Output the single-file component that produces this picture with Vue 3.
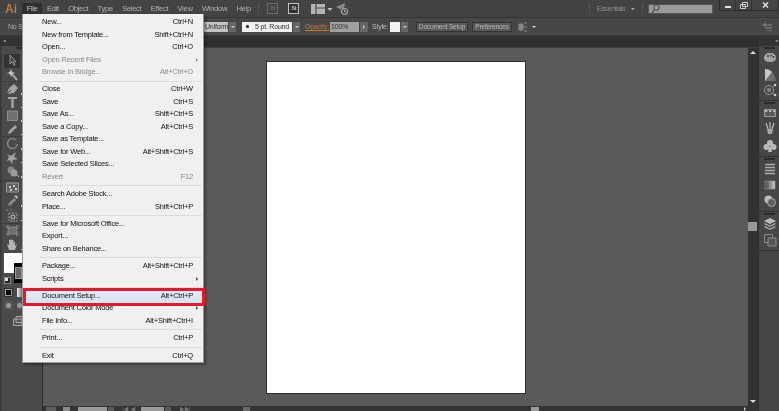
<template>
  <div class="app">
    <header class="menubar">
      <span class="logo">Ai</span>
      <nav class="mainmenu">
        <span v-for="m in menus" :key="m" class="mitem" :class="{ open: m === 'File' }">{{ m }}</span>
      </nav>
      <i class="vsep first"></i>
      <span class="badge dim">Br</span>
      <span class="badge">St</span>
      <svg class="wsicon" width="24" height="12" viewBox="0 0 24 12">
        <path d="M1 1h14v10H1z" fill="#b4b4b4" />
        <path d="M6 1v10M6 5h9" stroke="#4a4a4a" stroke-width="1.2" />
        <path d="M17.500 5h5l-2.500 3z" fill="#c4c4c4" />
      </svg>
      <svg class="rocket" width="14" height="14" viewBox="0 0 14 14">
        <path d="M1 5l9-4-1 5-4 1z" fill="#8c8c8c" />
        <path d="M5 9l3-5 1 3z" fill="#777" />
        <circle cx="9.500" cy="9.500" r="3" fill="none" stroke="#aaa" stroke-width="1.200" />
        <path d="M9.500 7.800v2h1.500" fill="none" stroke="#aaa" />
      </svg>
      <span class="spacer"></span>
      <i class="vsep"></i>
      <span class="essentials">Essentials</span>
      <span class="tiny-caret"></span>
      <i class="vsep second"></i>
      <div class="search">
        <svg width="9" height="10" viewBox="0 0 9 10"><circle cx="5.500" cy="3.500" r="2.700" fill="none" stroke="#444" /><path d="M3.500 5.500L1 9" stroke="#444" stroke-width="1.200" /></svg>
      </div>
      <div class="winbtns">
        <span class="wb min"><i></i></span>
        <span class="wb"><svg width="8" height="7" viewBox="0 0 8 7"><path d="M2.500.5h5v4h-5zM.5 2.500h5v4h-5z" fill="#444" stroke="#d0d0d0" /></svg></span>
        <span class="wb close"><svg width="7" height="6" viewBox="0 0 7 6"><path d="M1 .5l5 5M6 .5l-5 5" stroke="#e2e2e2" stroke-width="1.500" /></svg></span>
      </div>
    </header>

    <section class="controlbar">
      <span class="nosel">No Selection</span>
      <span class="spacer"></span>
      <span class="field uniform">Uniform</span>
      <span class="capbtn"><b></b></span>
      <span class="field stroke"><em></em>5 pt. Round</span>
      <span class="capbtn"><b></b></span>
      <a class="opacity">Opacity:</a>
      <span class="field pct">100%</span>
      <span class="capbtn side"></span>
      <span class="stylelabel">Style:</span>
      <span class="swatch"></span>
      <span class="capbtn"><b></b></span>
      <button class="cbtn docsetup">Document Setup</button>
      <button class="cbtn prefs">Preferences</button>
      <svg class="arrange" width="10" height="10" viewBox="0 0 10 10"><path d="M1 2h4v6H1zM6 1h3M6 5h3M6 9h3" fill="#888" stroke="#888" /></svg>
      <span class="ctrl-caret"></span>
      <span class="flexfill"></span>
      <svg class="cmenu" width="10" height="8" viewBox="0 0 10 8"><path d="M0 2h10M3 5h7M5 8h5M3 0v4" stroke="#8a8a8a" /></svg>
    </section>

    <div class="workspace">
      <aside class="tools">
        <div class="collapse-bar"><span class="chev">◂◂</span></div>
        <i class="grip"></i>
        <div class="toolicons">
          <span v-for="t in tools" :key="t.id" class="tool" :class="{ sel: t.sel, grouped: t.group, tall: t.tall }">
            <svg width="15" height="13" viewBox="0 0 15 13" v-html="t.svg"></svg>
            <i v-if="t.more" class="more"></i>
          </span>
        </div>
        <div class="colorwell">
          <span class="fill"></span>
          <span class="strokewell"><u></u></span>
          <span class="defaults"><s></s></span>
        </div>
        <div class="modes">
          <span class="mode"><i class="m-black"></i></span>
          <span class="mode grad"></span>
        </div>
        <div class="modes draw">
          <span class="mode round"><i></i></span>
          <span class="mode round"><i></i></span>
        </div>
        <svg class="screenmode" width="12" height="10" viewBox="0 0 12 10"><path d="M3 .5h8.500v6H3zM.5 3h8.500v6.500H.5z" fill="#555" stroke="#aaa" /></svg>
      </aside>

      <div class="stage">
        <div class="tabstrip"></div>
        <div class="canvas-row">
          <main class="canvas">
            <div class="artboard"></div>
          </main>
          <div class="vscroll">
            <span class="tri up"></span>
            <span class="vthumb"></span>
            <span class="tri down"></span>
          </div>
        </div>
        <footer class="status">
          <span class="st-ic"></span>
          <span class="st-ic small"></span>
          <span class="st-field"></span>
          <span class="st-cap"></span>
          <svg class="st-nav" width="14" height="5" viewBox="0 0 14 5"><path d="M1 0v5M6 0L2 2.500 6 5zM13 0L9 2.500 13 5z" fill="#777" stroke="#777" stroke-width=".5" /></svg>
          <span class="st-field second"></span>
          <span class="st-cap"></span>
          <svg class="st-nav next" width="10" height="5" viewBox="0 0 10 5"><path d="M0 0l4 2.500L0 5zM5 0l4 2.500L5 5zM9.500 0v5" fill="#777" stroke="#777" stroke-width=".5" /></svg>
          <span class="st-bits"></span>
          <span class="hthumb"></span>
          <span class="tri right"></span>
        </footer>
      </div>

      <aside class="docks">
        <div class="collapse-bar right"><span class="chev">◂◂</span></div>
        <div v-for="(g, i) in docks" :key="i" class="dock">
          <i class="grip"></i>
          <svg v-for="(d, j) in g" :key="j" width="14" height="14" viewBox="0 0 14 14" :style="{ marginTop: d.gap + 'px' }" v-html="d.svg"></svg>
        </div>
      </aside>
    </div>

    <div class="filemenu">
      <template v-for="(it, i) in items" :key="i">
        <div v-if="it.sep" class="sep"></div>
        <div v-else class="row" :class="{ off: it.off, hot: it.hot }">
          <span>{{ it.label }}</span>
          <span class="sc">{{ it.sc }}</span>
          <i v-if="it.sub" class="subarrow"></i>
        </div>
      </template>
    </div>
  </div>
</template>

<script setup>
const menus = ['File', 'Edit', 'Object', 'Type', 'Select', 'Effect', 'View', 'Window', 'Help']

const items = [
  { label: 'New...', sc: 'Ctrl+N' },
  { label: 'New from Template...', sc: 'Shift+Ctrl+N' },
  { label: 'Open...', sc: 'Ctrl+O' },
  { label: 'Open Recent Files', off: true, sub: true },
  { label: 'Browse in Bridge...', sc: 'Alt+Ctrl+O', off: true },
  { sep: true },
  { label: 'Close', sc: 'Ctrl+W' },
  { label: 'Save', sc: 'Ctrl+S' },
  { label: 'Save As...', sc: 'Shift+Ctrl+S' },
  { label: 'Save a Copy...', sc: 'Alt+Ctrl+S' },
  { label: 'Save as Template...' },
  { label: 'Save for Web...', sc: 'Alt+Shift+Ctrl+S' },
  { label: 'Save Selected Slices...' },
  { label: 'Revert', sc: 'F12', off: true },
  { sep: true },
  { label: 'Search Adobe Stock...' },
  { label: 'Place...', sc: 'Shift+Ctrl+P' },
  { sep: true },
  { label: 'Save for Microsoft Office...' },
  { label: 'Export...' },
  { label: 'Share on Behance...' },
  { sep: true },
  { label: 'Package...', sc: 'Alt+Shift+Ctrl+P' },
  { label: 'Scripts', sub: true },
  { sep: true },
  { label: 'Document Setup...', sc: 'Alt+Ctrl+P', hot: true },
  { label: 'Document Color Mode', sub: true },
  { label: 'File Info...', sc: 'Alt+Shift+Ctrl+I' },
  { sep: true },
  { label: 'Print...', sc: 'Ctrl+P' },
  { sep: true },
  { label: 'Exit', sc: 'Ctrl+Q' }
]

const c = '#a4a4a4'
const tools = [
  { id: 'select', sel: true, svg: `<path d="M5 1v9l2-2 2 3.500 1.200-.8-2-3H11z" fill="#444" stroke="${c}" stroke-width=".8"/>` },
  { id: 'wand', svg: `<path d="M7 6l5 6" stroke="${c}" stroke-width="2"/><path d="M6 1l1 3 3 1-3 1-1 3-1-3-3-1 3-1z" fill="#ccc"/>` },
  { id: 'pen', group: true, more: true, svg: `<path d="M2 12l2-6 5-4 4 4-4 5z" fill="${c}"/><path d="M2 12l4-4" stroke="#444"/>` },
  { id: 'type', more: true, svg: `<path d="M3 1h9v2H8.700v9H6.300V3H3z" fill="${c}"/>` },
  { id: 'rect', more: true, svg: `<path d="M2.500 2h10v9.500h-10z" fill="#707070" stroke="#8c8c8c"/>` },
  { id: 'brush', more: true, svg: `<path d="M3 11l1-3 6-6 2 2-6 6z" fill="${c}"/>` },
  { id: 'rotate', group: true, more: true, svg: `<path d="M11 3a5 5 0 1 0 1.500 4" fill="none" stroke="#858585" stroke-width="1.500"/>` },
  { id: 'warp', more: true, svg: `<path d="M2 3l4 2 5-4-2 5 4 2-5 1-1 4-2-4-3 1 2-4z" fill="${c}"/>` },
  { id: 'builder', tall: true, more: true, svg: `<circle cx="6" cy="5" r="3.500" fill="#858585"/><circle cx="9" cy="8" r="3.500" fill="#9c9c9c"/><path d="M12 10l2 2" stroke="#bbb"/>` },
  { id: 'mesh', group: true, tall: true, svg: `<path d="M1.500 2h12v9h-12z" fill="#606060" stroke="#999"/><path d="M4 5h2v2H4zM8 4h2v2H8zM10 7h2v2h-2zM5 8h2v2H5z" fill="#ccc"/>` },
  { id: 'dropper', more: true, svg: `<path d="M3 12l1-3 5-5 2 2-5 5z" fill="#8c8c8c"/><path d="M9 2l3 3 1-2-2-2z" fill="#bbb"/>` },
  { id: 'symbol', tall: true, more: true, svg: `<path d="M4 4h8v8H4z" fill="none" stroke="#999" stroke-dasharray="2 1"/><circle cx="8" cy="8" r="2" fill="none" stroke="#ccc"/><path d="M1 1h2M5 1h2" stroke="#888"/>` },
  { id: 'artboard', group: true, tall: true, svg: `<path d="M3 3h9v7H3z" fill="#6e6e6e"/><path d="M1 3h13M1 10h13M3 1v11M12 1v11" stroke="#999" stroke-dasharray="2 1"/>` },
  { id: 'hand', more: true, svg: `<path d="M4 12L2 6l2 1V2h1.500v3V1.500H7V5V2h1.500v3.500L10 3v5l2-2-2 6z" fill="#b4b4b4"/>` }
]

const docks = [
  [
    { gap: 2, svg: `<path d="M7 2C3 2 1 4 1 7s3 4 6 4 6-1 6-4-2-5-6-5z" fill="${c}"/><circle cx="5" cy="5" r="1" fill="#444"/><circle cx="8" cy="4.500" r="1" fill="#444"/><circle cx="10.500" cy="6" r="1" fill="#444"/>` },
    { gap: 3, svg: `<path d="M2 1c6 0 10 5 11 12H2z" fill="#6e6e6e"/><path d="M2 1c3 0 5 1 7 3L2 13z" fill="#c4c4c4"/>` },
    { gap: 1, svg: `<circle cx="6" cy="7" r="4.500" fill="none" stroke="#999"/><circle cx="6" cy="7" r="2.200" fill="#808080"/><circle cx="12" cy="2" r="1.300" fill="#ccc"/><circle cx="12" cy="12" r="1.300" fill="#ccc"/><path d="M10 4l1-1M10 10l1 1" stroke="#999"/>` }
  ],
  [
    { gap: 2, svg: `<path d="M1.500 3.500h11v7h-11z" fill="#606060" stroke="#999"/><path d="M2 4h3v2H2zM6 4h3v2H6zM10 4h2v2h-2z" fill="#b0b0b0"/><path d="M5 4v6M9 4v6" stroke="#444"/>` },
    { gap: 1, svg: `<path d="M4 8h6l-1 5H5z" fill="${c}"/><path d="M5 8L3 2M7 8V1M9 8l2-6" stroke="#bbb" stroke-width="1.200"/>` },
    { gap: 4, svg: `<circle cx="7" cy="4" r="3" fill="#b8b8b8"/><circle cx="3.500" cy="8" r="3" fill="#b8b8b8"/><circle cx="10.500" cy="8" r="3" fill="#b8b8b8"/><path d="M6 8h2l1 5H5z" fill="#b8b8b8"/>` }
  ],
  [
    { gap: 2, svg: `<path d="M2 2.500h10M2 5.500h10M2 8.500h10M2 11.500h10" stroke="#aaa" stroke-width="1.300"/>` },
    { gap: 2, svg: `<defs><linearGradient id="g1"><stop offset="0" stop-color="#444"/><stop offset="1" stop-color="#ccc"/></linearGradient></defs><path d="M2 3h10v8H2z" fill="url(#g1)" stroke="#999" stroke-width=".6"/>` },
    { gap: 2, svg: `<circle cx="5.500" cy="5.500" r="4" fill="#bbb"/><circle cx="8.500" cy="8.500" r="4" fill="#606060" stroke="#aaa"/>` }
  ],
  [
    { gap: 2, svg: `<path d="M7 1l6 3-6 3-6-3z" fill="#bbb"/><path d="M7 8.500L2 6 1 7l6 3 6-3-1-1zM7 11.500L2 9l-1 1 6 3 6-3-1-1z" fill="#aaa"/>` },
    { gap: 2, svg: `<path d="M1.500 1.500h8v8h-8z" fill="none" stroke="#8c8c8c"/><path d="M5 5h8v8H5z" fill="#555" stroke="#8c8c8c"/>` }
  ]
]
</script>

<style>
html, body { margin: 0; background: #484848; overflow: hidden; }
</style>

<style scoped>
.app {
  position: relative;
  width: 779px;
  height: 411px;
  display: flex;
  flex-direction: column;
  overflow: hidden;
  font-family: "Liberation Sans", Arial, sans-serif;
  font-size: 7.500px;
  letter-spacing: -.3px;
  background: #484848;
  filter: blur(.3px);
}

/* top menu */
.menubar {
  height: 17px;
  flex: none;
  display: flex;
  align-items: center;
  background: #434343;
  color: #b0b0b0;
  border-bottom: 1px solid #353535;
}
.logo { margin-left: 5px; width: 17px; font: bold 12px "Liberation Sans", sans-serif; letter-spacing: 0; color: #b57a45; }
.mainmenu { display: flex; font-size: 7.600px; }
.mitem { padding: 0 4.650px; height: 12px; line-height: 11px; }
.mitem.open { background: #2f2f2f; color: #c4c4c4; }
.vsep { width: 1px; height: 11px; background: #555; }
.vsep.first { margin-left: 3px; margin-right: 8px; }
.badge { width: 9px; height: 9px; border: 1px solid #c0c0c0; font: bold 5.500px/9px "Liberation Sans", sans-serif; text-align: center; color: #c0c0c0; background: #333; margin-right: 10px; }
.badge.dim { border-color: #6a6a6a; color: #6a6a6a; background: #444; }
.wsicon { margin-left: 1px; }
.rocket { margin-left: 1px; }
.menubar > .spacer { flex: 1; }
.essentials { margin-left: 7px; width: 28px; white-space: nowrap; color: #8f8f8f; font-size: 6.800px; }
.tiny-caret { margin-left: 6px; width: 0; height: 0; border: 2px solid transparent; border-top-color: #aaa; border-bottom: 0; }
.vsep.second { margin-left: 7px; }
.search { margin-left: 5px; width: 65px; height: 10px; background: #9a9a9a; border: 1px solid #555; box-sizing: border-box; display: flex; align-items: center; padding-left: 2px; }
.winbtns { margin-left: 6px; display: flex; align-self: flex-start; height: 10px; background: #444; border: 1px solid #2c2c2c; border-top: 0; border-radius: 0 0 0 2px; }
.wb { width: 15px; display: flex; align-items: center; justify-content: center; border-right: 1px solid #333; }
.wb.close { width: 26px; border: 0; }
.wb.min i { width: 6px; height: 2px; margin-top: 3px; background: #ddd; }

/* control bar */
.controlbar {
  height: 18px;
  flex: none;
  display: flex;
  align-items: center;
  background: #474747;
  color: #b4b4b4;
  border-bottom: 1px solid #3a3a3a;
  box-sizing: border-box;
  font-size: 7px;
  letter-spacing: -.2px;
}
.nosel { margin-left: 8px; width: 60px; white-space: nowrap; color: #aaa; }
.controlbar > .spacer { width: 136px; }
.field { height: 10px; line-height: 10px; white-space: nowrap; box-sizing: border-box; color: #333; }
.uniform { width: 24px; background: #c4c4c4; padding-left: 1px; }
.stroke { width: 50px; margin-left: 6px; background: #f0f0f0; padding-left: 4px; display: flex; align-items: center; }
.stroke em { width: 3px; height: 3px; border-radius: 50%; background: #111; margin-right: 6px; }
.capbtn { margin-left: 1px; width: 7px; height: 10px; background: #666; display: flex; align-items: center; justify-content: center; flex: none; }
.capbtn b { width: 0; height: 0; border: 2px solid transparent; border-top-color: #ccc; border-bottom: 0; }
.capbtn.side { width: 8px; }
.capbtn.side::after { content: ""; border: 2.500px solid transparent; border-left-color: #ccc; border-right: 0; }
.opacity { margin-left: 5px; width: 23px; color: #c47a26; text-decoration: underline; white-space: nowrap; }
.pct { margin-left: 2px; width: 29px; background: #a0a0a0; padding-left: 1px; }
.stylelabel { margin-left: 4px; width: 18px; color: #bbb; }
.swatch { width: 10px; height: 10px; background: #f2f2f2; }
.cbtn {
  margin: 0 0 0 8px;
  padding: 0;
  height: 10px;
  width: 52px;
  font: inherit;
  font-size: 6.600px;
  letter-spacing: -.2px;
  line-height: 8px;
  background: #585858;
  color: #b6b6b6;
  border: 1px solid #333;
  white-space: nowrap;
  overflow: hidden;
}
.prefs { margin-left: 4px; width: 40px; }
.arrange { margin-left: 6px; }
.ctrl-caret { margin-left: 4px; width: 0; height: 0; border: 2.500px solid transparent; border-top-color: #ddd; border-bottom: 0; }
.flexfill { flex: 1; }
.cmenu { margin-right: 7px; }

/* main */
.workspace { flex: 1; min-height: 0; display: flex; }
.tools {
  flex: none;
  display: flex;
  flex-direction: column;
  background: #4a4a4a;
  border-left: 2px solid #3c3c3c;
  border-right: 1px solid #2c2c2c;
  box-sizing: border-box;
  width: 43px;
}
.collapse-bar { height: 10px; margin-left: -2px; margin-right: -1px; background: #333; color: #999; font-size: 4px; line-height: 10px; padding-left: 3px; flex: none; letter-spacing: -1px; }
.collapse-bar.right { height: 9.500px; margin: 0; text-align: right; padding: 0 2px 0 0; }
.tools > .grip { display: block; width: 8px; height: 2px; margin: 1px 0 5px 14px; background: #2a2a2a; flex: none; }
.toolicons { display: flex; flex-direction: column; width: 20px; flex: none; }
.tool { position: relative; height: 13.500px; width: 20px; display: flex; align-items: center; justify-content: center; flex: none; }
.tool.sel { background: #333; width: 16px; margin-left: 2px; }
.tool.grouped { border-top: 1px solid #3c3c3c; }
.tool.tall { margin-top: 1px; }
.tool .more { position: absolute; right: 0; bottom: 1px; width: 1.500px; height: 1.500px; background: #ccc; }
.colorwell { position: relative; height: 30px; margin-top: 2px; flex: none; }
.fill { display: block; width: 18px; height: 20px; margin-left: 2px; background: #fff; }
.strokewell { position: absolute; left: 12px; top: 10px; width: 9px; height: 20px; background: #000; display: flex; align-items: center; justify-content: center; }
.strokewell u { width: 5px; height: 10px; background: #666; border: 1px solid #999; }
.defaults { position: absolute; left: 2px; top: 24px; width: 5px; height: 5px; background: #222; border: 1px solid #888; }
.defaults s { display: block; width: 3px; height: 3px; background: #ddd; }
.modes { display: flex; gap: 4px; margin: 5px 0 0 2px; flex: none; }
.mode { width: 9px; height: 9px; display: flex; align-items: center; justify-content: center; background: #333; }
.mode + .mode { width: 5px; }
.m-black { width: 5px; height: 5px; background: #000; border: 1px solid #999; }
.mode.grad { background: linear-gradient(90deg, #eee, #777); }
.modes.draw { margin-top: 4px; }
.mode.round { background: #555; }
.mode.round i { width: 5px; height: 5px; background: #999; border-radius: 50%; }
.screenmode { margin: 6px 0 0 11px; flex: none; }

.stage { flex: 1; min-width: 0; display: flex; flex-direction: column; }
.tabstrip { height: 12px; flex: none; background: #2f2f2f; border-bottom: 1px solid #3d3d3d; box-sizing: border-box; }
.canvas-row { flex: 1; min-height: 0; display: flex; }
.canvas { flex: 1; min-width: 0; background: #5a5a5a; display: flex; justify-content: center; padding-top: 13px; box-sizing: border-box; }
.artboard { width: 258px; height: 331px; background: #fff; border: 1px solid #2c2c2c; flex: none; }
.vscroll { position: relative; width: 10px; flex: none; background: #323232; display: flex; flex-direction: column; align-items: center; }
.tri { width: 0; height: 0; border: 3px solid transparent; display: block; }
.tri.up { border-bottom-color: #ddd; border-top: 0; margin-top: 3px; }
.tri.down { border-top-color: #ddd; border-bottom: 0; margin-top: auto; margin-bottom: 3px; }
.vthumb { position: absolute; top: 174px; left: 0; width: 9px; height: 9px; background: #989898; }
.status { height: 5px; flex: none; display: flex; align-items: flex-start; background: #343434; box-sizing: border-box; padding: 1px 0 0 3px; overflow: hidden; }
.st-ic { width: 10px; height: 5px; background: #5e5e5e; margin-right: 7px; flex: none; }
.st-ic.small { width: 7px; background: #8c8c8c; margin-right: 8px; }
.st-field { width: 29px; height: 5px; background: #999; flex: none; }
.st-field.second { width: 23px; margin-left: 5px; }
.st-cap { width: 6px; height: 5px; background: #5a5a5a; margin-left: 1px; flex: none; }
.st-nav { margin-left: 8px; flex: none; }
.st-nav.next { margin-left: 9px; }
.st-bits { width: 7px; height: 5px; margin-left: 53px; background: #6a6a6a; flex: none; }
.hthumb { width: 8px; height: 5px; background: #9c9c9c; margin-left: 281px; flex: none; }
.tri.right { border: 2.500px solid transparent; border-left-color: #ccc; border-right: 0; margin-left: auto; margin-right: 12px; }

.docks { width: 21px; flex: none; display: flex; flex-direction: column; background: #464646; border-left: 1px solid #2f2f2f; box-sizing: border-box; }
.dock { display: flex; flex-direction: column; align-items: center; padding: 0 0 3px 1px; border-bottom: 1px solid #333; flex: none; }
.dock .grip { width: 11px; height: 2px; margin-top: 1px; background: #2a2a2a; }

/* file menu */
.filemenu {
  position: absolute;
  left: 22px;
  top: 14px;
  width: 182px;
  height: 349px;
  box-sizing: border-box;
  padding-top: 2px;
  background: #f0f0f0;
  border: 1px solid #9a9a9a;
  border-top: 0;
  box-shadow: 2px 2px 2px rgba(0, 0, 0, .35);
  color: #111;
  letter-spacing: -.2px;
}
.row {
  position: relative;
  height: 12.500px;
  line-height: 12.500px;
  padding: 0 10px 0 19px;
  display: flex;
  justify-content: space-between;
  white-space: nowrap;
}
.row.off { color: #8a8a8a; }
.row.hot { background: linear-gradient(#e4edf8, #d5e3f4); z-index: 1; }
.row.hot::after {
  content: "";
  position: absolute;
  left: 0;
  right: -2px;
  top: -1.500px;
  bottom: -3.800px;
  border: 3px solid #e8182c;
}
.sep { height: 4.800px; position: relative; }
.sep::after { content: ""; position: absolute; left: 17px; right: 1px; top: 2px; height: 1px; background: #dcdcdc; }
.subarrow { position: absolute; right: 5px; top: 4px; width: 0; height: 0; border: 2.500px solid transparent; border-left-color: #444; border-right: 0; }
.off .subarrow { border-left-color: #888; }
</style>
